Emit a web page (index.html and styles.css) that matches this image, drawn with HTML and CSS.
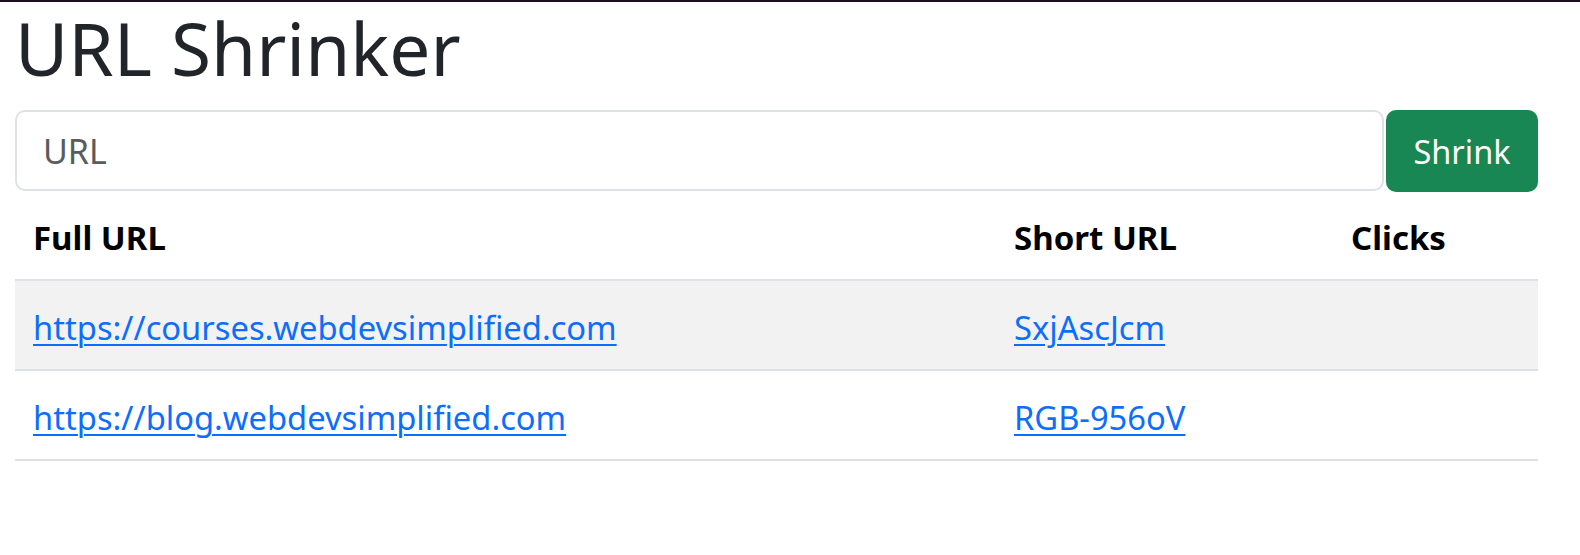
FILE: index.html
```html
<!DOCTYPE html>
<html lang="en">
<head>
<meta charset="utf-8">
<title>URL Shrinker</title>
<link rel="stylesheet" href="styles.css">
</head>
<body>
<div class="topbar"></div>
<main class="container">
  <h1 class="title">URL Shrinker</h1>
  <form class="shrink-form">
    <input class="url-input" type="url" placeholder="URL">
    <button class="btn-shrink" type="button">Shrink</button>
  </form>
  <table class="url-table">
    <colgroup>
      <col class="col-full">
      <col class="col-short">
      <col class="col-clicks">
    </colgroup>
    <thead>
      <tr><th>Full URL</th><th>Short URL</th><th>Clicks</th></tr>
    </thead>
    <tbody>
      <tr class="striped">
        <td><a href="#">https://courses.webdevsimplified.com</a></td>
        <td><a href="#">SxjAscJcm</a></td>
        <td></td>
      </tr>
      <tr>
        <td><a href="#">https://blog.webdevsimplified.com</a></td>
        <td><a href="#">RGB-956oV</a></td>
        <td></td>
      </tr>
    </tbody>
  </table>
</main>
</body>
</html>
```
FILE: styles.css
```css
html, body {
  margin: 0;
  padding: 0;
  background: #fff;
}
body {
  font-family: "Noto Sans", "Open Sans", "DejaVu Sans", sans-serif;
  color: #212529;
}
.topbar {
  height: 2px;
  background: #1e0b21;
}
.container {
  margin-left: 15px;
  width: 1523px;
  padding-top: 2px;
}
.title {
  margin: 0 0 18px 0;
  font-size: 73px;
  line-height: 88px;
  font-weight: 400;
  color: #212529;
}
.shrink-form {
  display: flex;
  align-items: flex-start;
  gap: 2px;
  margin: 0;
}
.url-input {
  flex: 1;
  box-sizing: border-box;
  height: 81px;
  border: 2px solid #dee2e6;
  border-radius: 10px;
  padding: 0 26px;
  font-family: inherit;
  font-size: 34px;
  color: #212529;
  background: #fff;
  outline: none;
}
.url-input::placeholder {
  color: #595c5f;
}
.btn-shrink {
  box-sizing: border-box;
  width: 152px;
  height: 82px;
  border: none;
  border-radius: 10px;
  background: #198754;
  color: #fff;
  font-family: inherit;
  font-size: 32.5px;
  padding: 0;
  cursor: pointer;
}
.url-table {
  width: 1523px;
  border-collapse: collapse;
  table-layout: fixed;
  font-size: 32.7px;
  line-height: 48px;
}
.col-full { width: 981px; }
.col-short { width: 337px; }
.col-clicks { width: 205px; }
.url-table th {
  text-align: left;
  font-weight: 700;
  font-size: 33px;
  color: #000;
  padding: 22px 18px 17px;
  border-bottom: 2px solid #dee2e6;
}
.url-table td {
  padding: 23px 18px 17px;
  border-bottom: 2px solid #dee2e6;
}
.url-table tr.striped td {
  background: #f2f2f2;
}
.url-table a {
  color: #0d6efd;
  text-decoration: underline;
  text-underline-offset: 4px;
  text-decoration-thickness: 2px;
}
```
